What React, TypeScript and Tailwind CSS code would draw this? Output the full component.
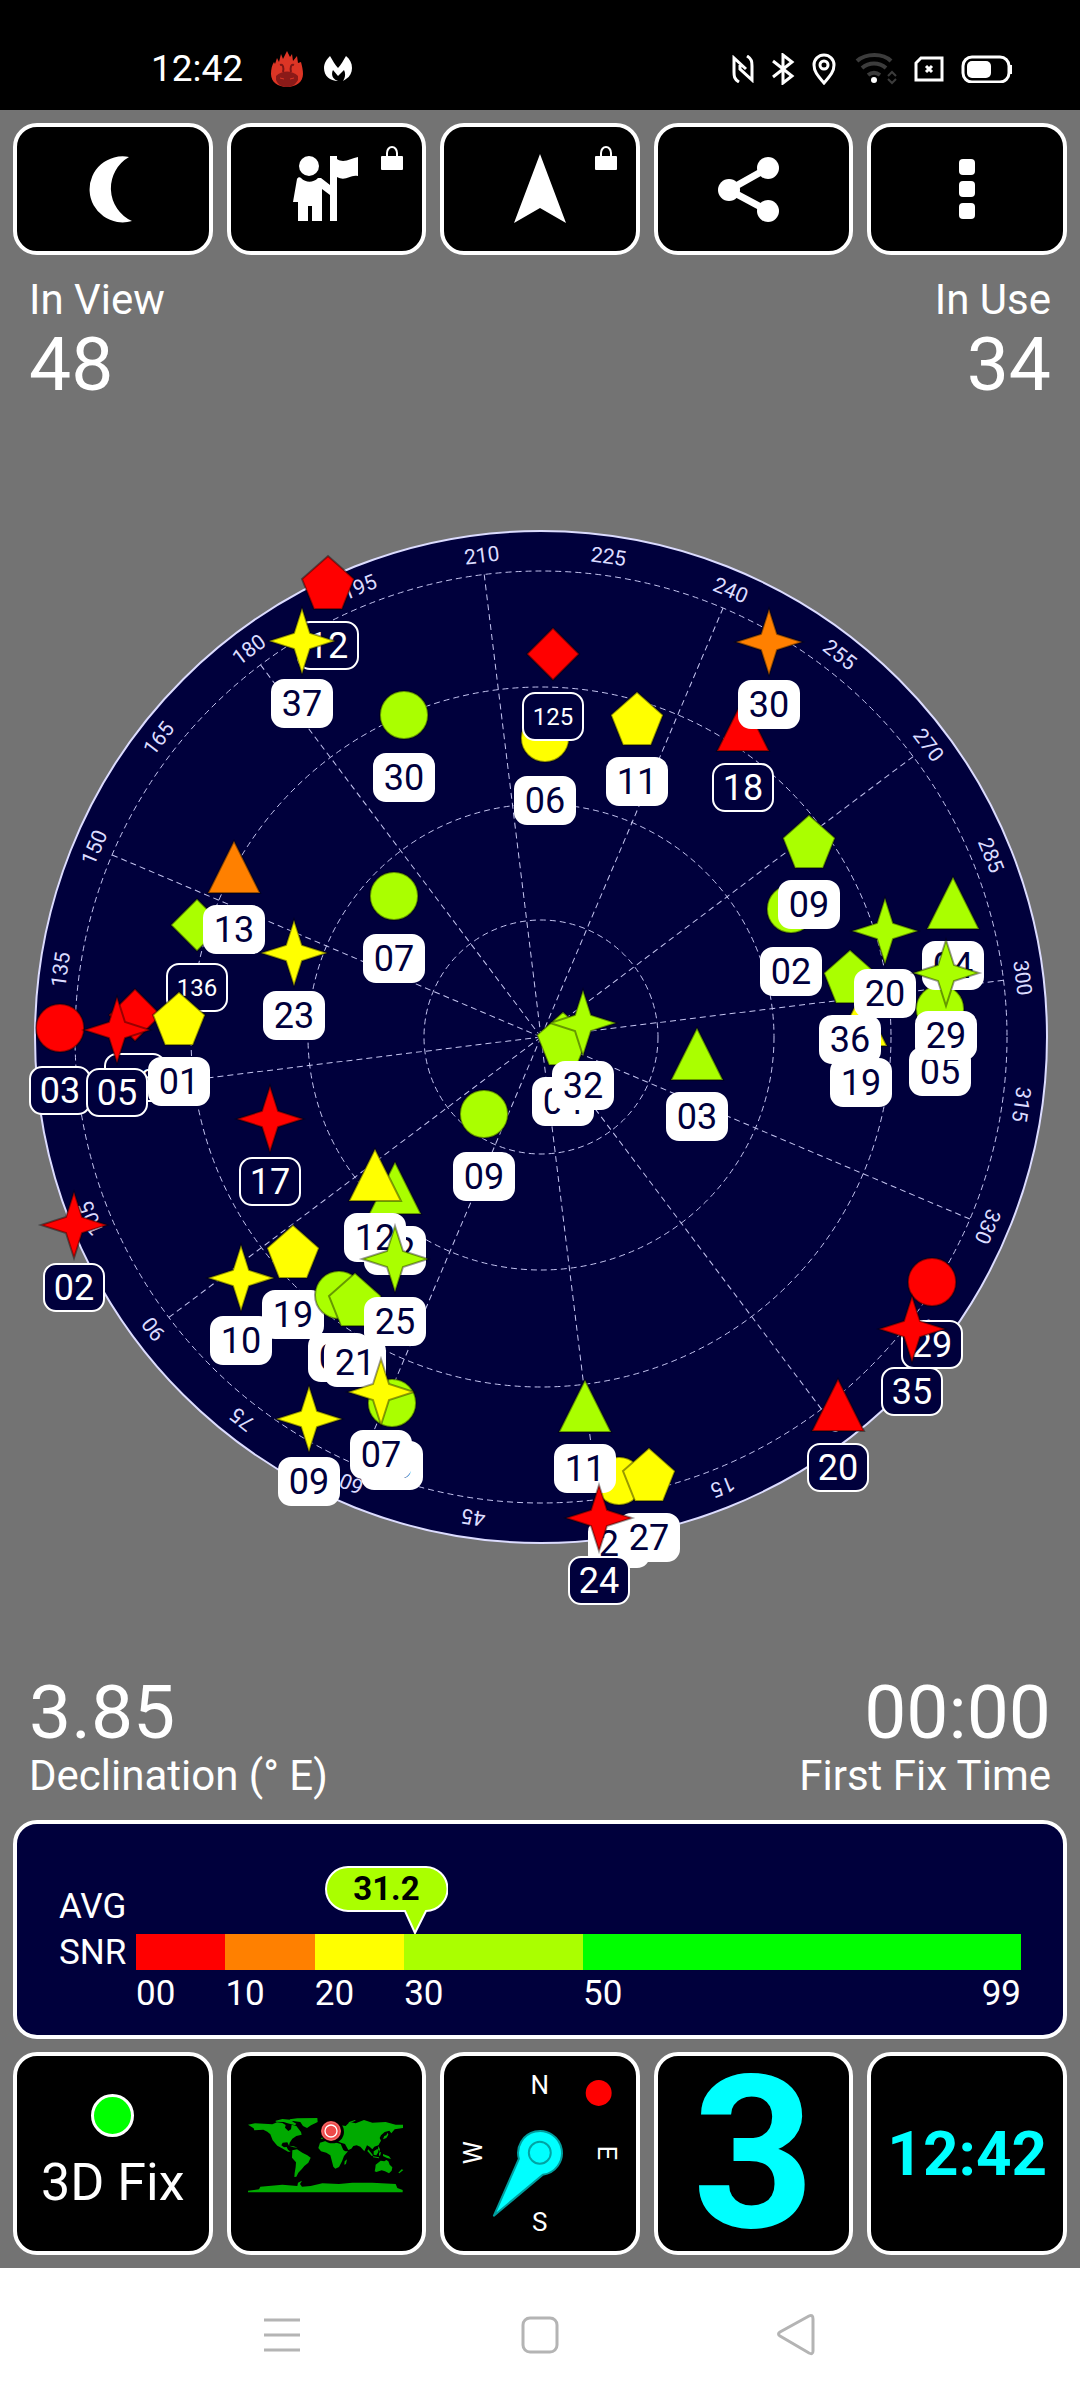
import React from "react";

type Shape = "circle" | "star" | "pentagon" | "triangle" | "diamond";

interface Satellite {
  id: string;
  shape: Shape;
  color: string;
  x: number;
  y: number;
  used: boolean;
}

const RED = "#ff0000";
const ORANGE = "#ff8000";
const YELLOW = "#ffff00";
const LIME = "#aaff00";
const GREEN = "#00ff00";
const NAVY = "#00003c";

const CX = 541;
const CY = 537;
const RADIUS = 506;
const HEADING = 217;

const sat = (
  id: string,
  shape: Shape,
  color: string,
  x: number,
  y: number,
  used = true
): Satellite => ({ id, shape, color, x, y, used });

// later entries are painted over earlier ones
const satellites: Satellite[] = [
  sat("12", "pentagon", RED, 328, 83, false),
  sat("37", "star", YELLOW, 302, 141),
  sat("30", "circle", LIME, 404, 215),
  sat("06", "circle", YELLOW, 545, 238),
  sat("125", "diamond", RED, 553, 154, false),
  sat("11", "pentagon", YELLOW, 637, 219),
  sat("18", "triangle", RED, 743, 225, false),
  sat("30", "star", ORANGE, 769, 142),
  sat("02", "circle", LIME, 791, 409),
  sat("09", "pentagon", LIME, 809, 342),
  sat("19", "triangle", YELLOW, 861, 520),
  sat("36", "pentagon", LIME, 850, 477),
  sat("20", "star", LIME, 885, 431),
  sat("05", "circle", LIME, 940, 509),
  sat("04", "triangle", LIME, 953, 403),
  sat("29", "star", LIME, 946, 473),
  sat("04", "pentagon", LIME, 563, 539),
  sat("32", "star", LIME, 583, 523),
  sat("03", "triangle", LIME, 697, 554),
  sat("136", "diamond", LIME, 197, 425, false),
  sat("13", "triangle", ORANGE, 234, 367),
  sat("07", "circle", LIME, 394, 396),
  sat("23", "star", YELLOW, 294, 453),
  sat("123", "diamond", RED, 135, 515, false),
  sat("03", "circle", RED, 60, 528, false),
  sat("05", "star", RED, 117, 530, false),
  sat("01", "pentagon", YELLOW, 179, 519),
  sat("17", "star", RED, 270, 619, false),
  sat("02", "star", RED, 74, 725, false),
  sat("09", "circle", LIME, 484, 614),
  sat("02", "triangle", LIME, 395, 688),
  sat("12", "triangle", YELLOW, 375, 675),
  sat("10", "star", YELLOW, 241, 778),
  sat("19", "pentagon", YELLOW, 293, 752),
  sat("05", "circle", LIME, 339, 795),
  sat("21", "pentagon", LIME, 355, 800),
  sat("25", "star", LIME, 395, 759),
  sat("09", "star", YELLOW, 309, 919),
  sat("08", "circle", LIME, 392, 903),
  sat("07", "star", YELLOW, 381, 892),
  sat("26", "circle", YELLOW, 619, 981),
  sat("27", "pentagon", YELLOW, 649, 975),
  sat("11", "triangle", LIME, 585, 906),
  sat("24", "star", RED, 599, 1018, false),
  sat("20", "triangle", RED, 838, 905, false),
  sat("29", "circle", RED, 932, 782, false),
  sat("35", "star", RED, 912, 829, false),
];

const shapePoints: Record<Exclude<Shape, "circle">, string> = {
  star: "0,-33 8,-8 33,0 8,8 0,33 -8,8 -33,0 -8,-8",
  pentagon: "0,-27 26,-4 14,26 -14,26 -26,-4",
  triangle: "0,-26 26,26 -26,26",
  diamond: "0,-26 26,0 0,26 -26,0",
};

const Marker = ({ item }: { item: Satellite }) => {
  const small = item.id.length > 2;
  return (
    <g transform={`translate(${item.x} ${item.y})`}>
      {item.shape === "circle" ? (
        <circle r="24" fill={item.color} stroke="#000" strokeOpacity="0.4" strokeWidth="2" />
      ) : (
        <polygon
          points={shapePoints[item.shape]}
          fill={item.color}
          stroke="#000"
          strokeOpacity="0.4"
          strokeWidth="2"
        />
      )}
      <rect
        x="-30"
        y="39"
        width="60"
        height="47"
        rx="12"
        fill={item.used ? "#fff" : NAVY}
        stroke="#fff"
        strokeWidth="2"
      />
      <text
        y={small ? 71 : 75}
        textAnchor="middle"
        fontSize={small ? 24 : 36}
        fill={item.used ? NAVY : "#fff"}
      >
        {item.id}
      </text>
    </g>
  );
};

const SkyView = () => {
  const azimuths = Array.from({ length: 24 }, (_, i) => i * 15);
  return (
    <svg viewBox="0 0 1080 1120" className="w-full" role="img" aria-label="Sky view">
      <circle cx={CX} cy={CY} r={RADIUS} fill={NAVY} stroke="#dcdcff" strokeWidth="2" />
      <g fill="none" stroke="#c4c4f0" strokeWidth="1" strokeDasharray="6 4">
        {[117, 233, 350, 466].map((r) => (
          <circle key={r} cx={CX} cy={CY} r={r} />
        ))}
        {azimuths
          .filter((az) => az % 30 === 0)
          .map((az) => (
            <line
              key={az}
              x1={CX}
              y1={CY}
              x2={CX}
              y2={CY - 466}
              transform={`rotate(${az - HEADING} ${CX} ${CY})`}
            />
          ))}
      </g>
      <g fill="#dcdcff" fontSize="21" textAnchor="middle">
        {azimuths.map((az) => (
          <text key={az} x={CX} y={CY - 478} transform={`rotate(${az - HEADING} ${CX} ${CY})`}>
            {az}
          </text>
        ))}
      </g>
      {satellites.map((item, i) => (
        <Marker key={i} item={item} />
      ))}
    </svg>
  );
};

const StatusBar = () => (
  <header className="flex h-[110px] items-center bg-black pt-7 pr-[67px] pl-[151px] text-white">
    <span className="text-[37px] leading-[44px]">12:42</span>
    <svg className="ml-7 h-[38px] w-8" viewBox="0 0 32 38">
      <path
        d="M16 1l3 6 2-3 1 7 4-5 1 7 3-1c1 4 2 8 2 12 0 8-7 13-16 13S0 32 0 24c0-5 1-9 3-12l1 2 2-6 2 4 2-8 2 5z"
        fill="#dc3525"
      />
      <path d="M9 15c3-1 4 2 3 7M23 15c-3-1-4 2-3 7" stroke="#7c1616" strokeWidth="2" fill="none" />
      <path d="M5 26c6-6 16-6 22 0v4c-3 5-6 7-11 7S7 35 5 30z" fill="#8a1a18" />
      <path d="M9 28l4 1M23 28l-4 1" stroke="#dc3525" strokeWidth="1" fill="none" />
    </svg>
    <svg className="ml-[21px] h-[26px] w-7" viewBox="0 0 28 26">
      <path
        d="M6 0c3 5 5 9 8 12 3-3 5-7 8-12 8 6 8 18 0 23l-3 2c2-3 3-7 1-11l-6 6-5-6c-2 4-1 9 5 11C6 25 0 20 0 12 0 7 3 3 6 0z"
        fill="#fff"
      />
    </svg>
    <div className="ml-auto flex items-center gap-[17px]">
      <svg width="22" height="28" viewBox="0 0 22 28" fill="none" stroke="#fff" strokeWidth="3">
        <path d="M7 27C2 24 2 21 2 17V3l12 11M15 1c5 3 5 6 5 10v14L8 14v-4" />
      </svg>
      <svg width="24" height="32" viewBox="0 0 24 32" fill="none" stroke="#fff" strokeWidth="3">
        <path d="M2 8l19 15-9 7V2l9 7L2 24" />
      </svg>
      <svg width="24" height="32" viewBox="0 0 24 32" fill="none" stroke="#fff" strokeWidth="3">
        <path d="M12 30C5 22 2 18 2 12a10 10 0 0 1 20 0c0 6-3 10-10 18z" />
        <circle cx="12" cy="12" r="4" />
      </svg>
      <svg width="44" height="32" viewBox="0 0 44 32" fill="none" stroke="#3c3c3c" strokeWidth="4">
        <path d="M4 8c9-8 26-8 34 0M9 15c7-6 17-6 24 0M15 22c4-3 8-3 12 0" />
        <circle cx="21" cy="27" r="3" fill="#fff" stroke="none" />
        <path d="M35 23l4-4 4 4M35 26l4 4 4-4" strokeWidth="2" />
      </svg>
      <svg width="30" height="26" viewBox="0 0 30 26" fill="none" stroke="#fff" strokeWidth="3">
        <path d="M7 2h21v22H2V7zM12 10l6 6M18 10l-6 6" />
      </svg>
      <svg width="52" height="28" viewBox="0 0 52 28">
        <rect x="2" y="2" width="46" height="25" rx="9" fill="none" stroke="#fff" strokeWidth="3" />
        <rect x="6" y="6" width="24" height="17" rx="5" fill="#fff" />
        <path d="M49 10v9" stroke="#fff" strokeWidth="4" />
      </svg>
    </div>
  </header>
);

const tile =
  "relative flex items-center justify-center rounded-[24px] border-4 border-white bg-black";

const Lock = () => (
  <svg className="absolute top-[18px] right-[18px] h-[26px] w-6" viewBox="0 0 24 26">
    <path d="M7 12V8a5 6 0 0 1 10 0v4" fill="none" stroke="#fff" strokeWidth="2" />
    <rect x="1" y="11" width="22" height="14" rx="1" fill="#fff" />
  </svg>
);

const Toolbar = () => (
  <nav className="grid h-[132px] grid-cols-5 gap-[14px]">
    <button className={tile} aria-label="Night mode">
      <svg width="72" height="72" viewBox="0 0 72 72">
        <path d="M52 4A33 33 0 1 0 55 68A36 36 0 0 1 52 4z" fill="#fff" />
      </svg>
    </button>
    <button className={tile} aria-label="Waypoints">
      <svg width="72" height="72" viewBox="0 0 72 72" fill="#fff">
        <circle cx="19" cy="13" r="10" />
        <path d="M40 3h7v65h-7V42l-8-6v32H22V53h-4v15H8V49H3L7 26c1-2 3-2 4-1 5 5 12 5 17 0l3 0 9 7z" />
        <path d="M47 6c7 5 14-1 21-2v19c-8-2-12 6-21 1z" />
      </svg>
      <Lock />
    </button>
    <button className={tile} aria-label="Navigate">
      <svg width="72" height="72" viewBox="0 0 72 72">
        <path d="M36 1l26 69-26-15-26 15z" fill="#fff" />
      </svg>
      <Lock />
    </button>
    <button className={tile} aria-label="Share">
      <svg width="72" height="72" viewBox="0 0 72 72" fill="#fff">
        <path d="M50 15L11 37l39 21" fill="none" stroke="#fff" strokeWidth="7" />
        <circle cx="50" cy="15" r="11" />
        <circle cx="11" cy="37" r="11" />
        <circle cx="50" cy="58" r="11" />
      </svg>
    </button>
    <button className={tile} aria-label="More">
      <svg width="72" height="72" viewBox="0 0 72 72" fill="#fff">
        <rect x="28" y="6" width="16" height="16" rx="4" />
        <rect x="28" y="28" width="16" height="16" rx="4" />
        <rect x="28" y="50" width="16" height="16" rx="4" />
      </svg>
    </button>
  </nav>
);

const ranges = [
  { from: "00", color: RED },
  { from: "10", color: ORANGE },
  { from: "20", color: YELLOW },
  { from: "30", color: LIME },
  { from: "50", color: GREEN },
];

const SnrPanel = () => {
  const avg = 31.2;
  return (
    <section className="mt-5 flex h-[219px] rounded-[24px] border-4 border-white bg-[#00003c] px-[42px] text-[35px]">
      <div className="w-[77px] shrink-0 pt-[60px] leading-[46px]">
        <div>AVG</div>
        <div>SNR</div>
      </div>
      <div className="flex-1 pt-[110px]">
        <div className="relative grid h-9 grid-cols-[10fr_10fr_10fr_20fr_49fr]">
          {ranges.map((range) => (
            <div key={range.from} style={{ backgroundColor: range.color }} />
          ))}
          <div className="absolute bottom-9" style={{ left: `${(avg / 99) * 100}%` }}>
            <div className="relative -ml-[90px] h-[68px] w-[123px]">
              <svg className="absolute inset-0" width="123" height="68" viewBox="0 0 123 68">
                <path
                  d="M23 1H100A22 22 0 0 1 101 45L90 67 80 45H23A22 22 0 0 1 23 1z"
                  fill={LIME}
                  stroke="#fff"
                  strokeWidth="2"
                />
              </svg>
              <div className="relative text-center text-[33px] leading-[46px] font-bold text-black">
                {avg}
              </div>
            </div>
          </div>
        </div>
        <div className="mt-1 grid grid-cols-[10fr_10fr_10fr_20fr_49fr] leading-10">
          {ranges.map((range) => (
            <div key={range.from} className="flex justify-between">
              <span>{range.from}</span>
              {range.from === "50" && <span>99</span>}
            </div>
          ))}
        </div>
      </div>
    </section>
  );
};

const WorldMap = () => (
  <svg width="160" height="80" viewBox="21 26 480 240" fill="#00aa00">
    <path d="M27 58l21-4 27 1 25 2 14-6 16 2 10 6-2 8 10 10 8-5 2-14 14 4 14 18 2 8-16 4-12 8-8 12-2 9-5-10-14 1-4 8 8 6 8-1 4 8 8 6h-8l-18-10-14-8-14-16-7-18-9-8-12-6-27 2-2-6z" />
    <path d="M110 46l20-5 24 2 10 8 8 4-4 5-22-6-12-4-24-1zM152 42l23-3 60-1 1 12-20 10-12 8-12-6-8-12-28-4z" />
    <path d="M150 121l14 2 12 4-12-1zM160 135l14-3 16 10 15 8 10 7-7 15-12 10-8 10-10 10-6 12-6 1 1-12 3-18 1-14-12-14z" />
    <path d="M243 112l19-6 23 4 20 6 8 18 6 4h8l-12 14-6 16-9 17-11 5-6-6-5-19-4-15-12-8-16-4-8-10zM324 162l-3 14-5 2 1-10z" />
    <path d="M245 100l10-10 6-12 14-12 20-8 25 4 12-12 18 4 25-10 25 8 40-2 30 8 22 0v10l-25 4-10 12-6-8-14 4-11 10-4 8 4 8-8 14-12 4-6 8-8-8-8-4-8 18-12-14-11-4-10 2-6 8-9 4-10-18-12-4-14-6-15-2z" />
    <path d="M328 51l20-7 2 2-18 7zM436 92l6-2 4-8 2 6-6 10-10 4zM416 112l3 4-2 3zM418 122l5 10-2 8-4-8zM388 132l14 18-3 3-14-16zM404 138l12-8 2 10-6 10-8-2zM402 153l18 3v3l-18-3zM420 142l6-2-2 10-4 2zM432 146l18 7 6 8-12-3-12-6z" />
    <path d="M410 178l15-12 11 2 6-4 6 4 4 10 8 8-2 10-8 8-12-6-10-3-16 5-5-2 2-10zM488 192l5 2-12 10-3-2z" />
    <path d="M27 261v-5l33-4 4-8 66-6 45 4 2-10 12-6-6 10 6 8 26-2 35-8 50 2 40-4h60l70 4 5 12 16 6v7z" />
    <circle cx="280" cy="79" r="35" fill="#000" />
    <circle cx="276" cy="77" r="30" fill="#ee4a4a" />
    <circle cx="276" cy="77" r="27" fill="none" stroke="#f58a8a" strokeWidth="2" />
    <circle cx="276" cy="77" r="18" fill="none" stroke="#fff" strokeWidth="4" />
  </svg>
);

const Compass = () => (
  <svg className="w-full" viewBox="0 0 192 195" fill="#fff" fontSize="26" textAnchor="middle">
    <text x="96" y="38">N</text>
    <text x="96" y="175">S</text>
    <text transform="translate(38 97) rotate(-90)">W</text>
    <text transform="translate(154 97) rotate(90)">E</text>
    <circle cx="155" cy="37" r="13" fill={RED} />
    <path
      d="M50 160L75 103A22 22 0 1 1 99 119z"
      fill="#00ffff"
      stroke="#009c9c"
      strokeWidth="2"
      strokeLinejoin="round"
    />
    <circle cx="96" cy="97" r="11" fill="none" stroke="#00a4a4" strokeWidth="2" />
  </svg>
);

const Widgets = () => (
  <section className="mt-[13px] grid grid-cols-5 grid-rows-[203px] gap-[14px]">
    <button className={tile}>
      <span className="flex flex-col items-center gap-4">
        <span className="h-[43px] w-[43px] rounded-full border-3 border-white bg-[#00ff00]" />
        <span className="text-[52px] leading-[60px]">3D Fix</span>
      </span>
    </button>
    <button className={tile} aria-label="World map">
      <WorldMap />
    </button>
    <button className={tile} aria-label="Compass">
      <Compass />
    </button>
    <button className={tile}>
      <span className="text-[213px] leading-[180px] font-bold text-[#00ffff]">3</span>
    </button>
    <button className={tile}>
      <span className="text-[62px] leading-none font-bold text-[#00ffff]">12:42</span>
    </button>
  </section>
);

const NavBar = () => (
  <footer className="flex h-[132px] items-center justify-between bg-white px-[24%]">
    <button aria-label="Recent apps">
      <svg width="46" height="46" viewBox="0 0 46 46" stroke="#b4b4b4" strokeWidth="3">
        <path d="M5 9h36M5 24h36M5 39h36" />
      </svg>
    </button>
    <button aria-label="Home">
      <svg width="46" height="46" viewBox="0 0 46 46" fill="none" stroke="#b4b4b4" strokeWidth="3">
        <rect x="6" y="7" width="34" height="34" rx="7" />
      </svg>
    </button>
    <button aria-label="Back">
      <svg width="46" height="46" viewBox="0 0 46 46" fill="none" stroke="#b4b4b4" strokeWidth="3">
        <path d="M34 5L5 21q-3 2 0 4l29 17q4 2 4-2V8q0-5-4-3z" />
      </svg>
    </button>
  </footer>
);

const App = () => {
  return (
    <div className="w-full bg-[#737373] font-[Roboto,sans-serif] text-white">
      <StatusBar />
      <main className="p-[13px]">
        <Toolbar />
        <div className="mt-[21px] flex justify-between px-4">
          <div>
            <div className="text-[42px] leading-[48px]">In View</div>
            <div className="text-[75px] leading-[80px]">48</div>
          </div>
          <div className="text-right">
            <div className="text-[42px] leading-[48px]">In Use</div>
            <div className="text-[75px] leading-[80px]">34</div>
          </div>
        </div>
        <div className="-mx-[13px] mt-24">
          <SkyView />
        </div>
        <div className="mt-[52px] flex justify-between px-4">
          <div>
            <div className="text-[75px] leading-[80px]">3.85</div>
            <div className="text-[42px] leading-[48px]">Declination (° E)</div>
          </div>
          <div className="text-right">
            <div className="text-[75px] leading-[80px]">00:00</div>
            <div className="text-[42px] leading-[48px]">First Fix Time</div>
          </div>
        </div>
        <SnrPanel />
        <Widgets />
      </main>
      <NavBar />
    </div>
  );
};

export default App;
